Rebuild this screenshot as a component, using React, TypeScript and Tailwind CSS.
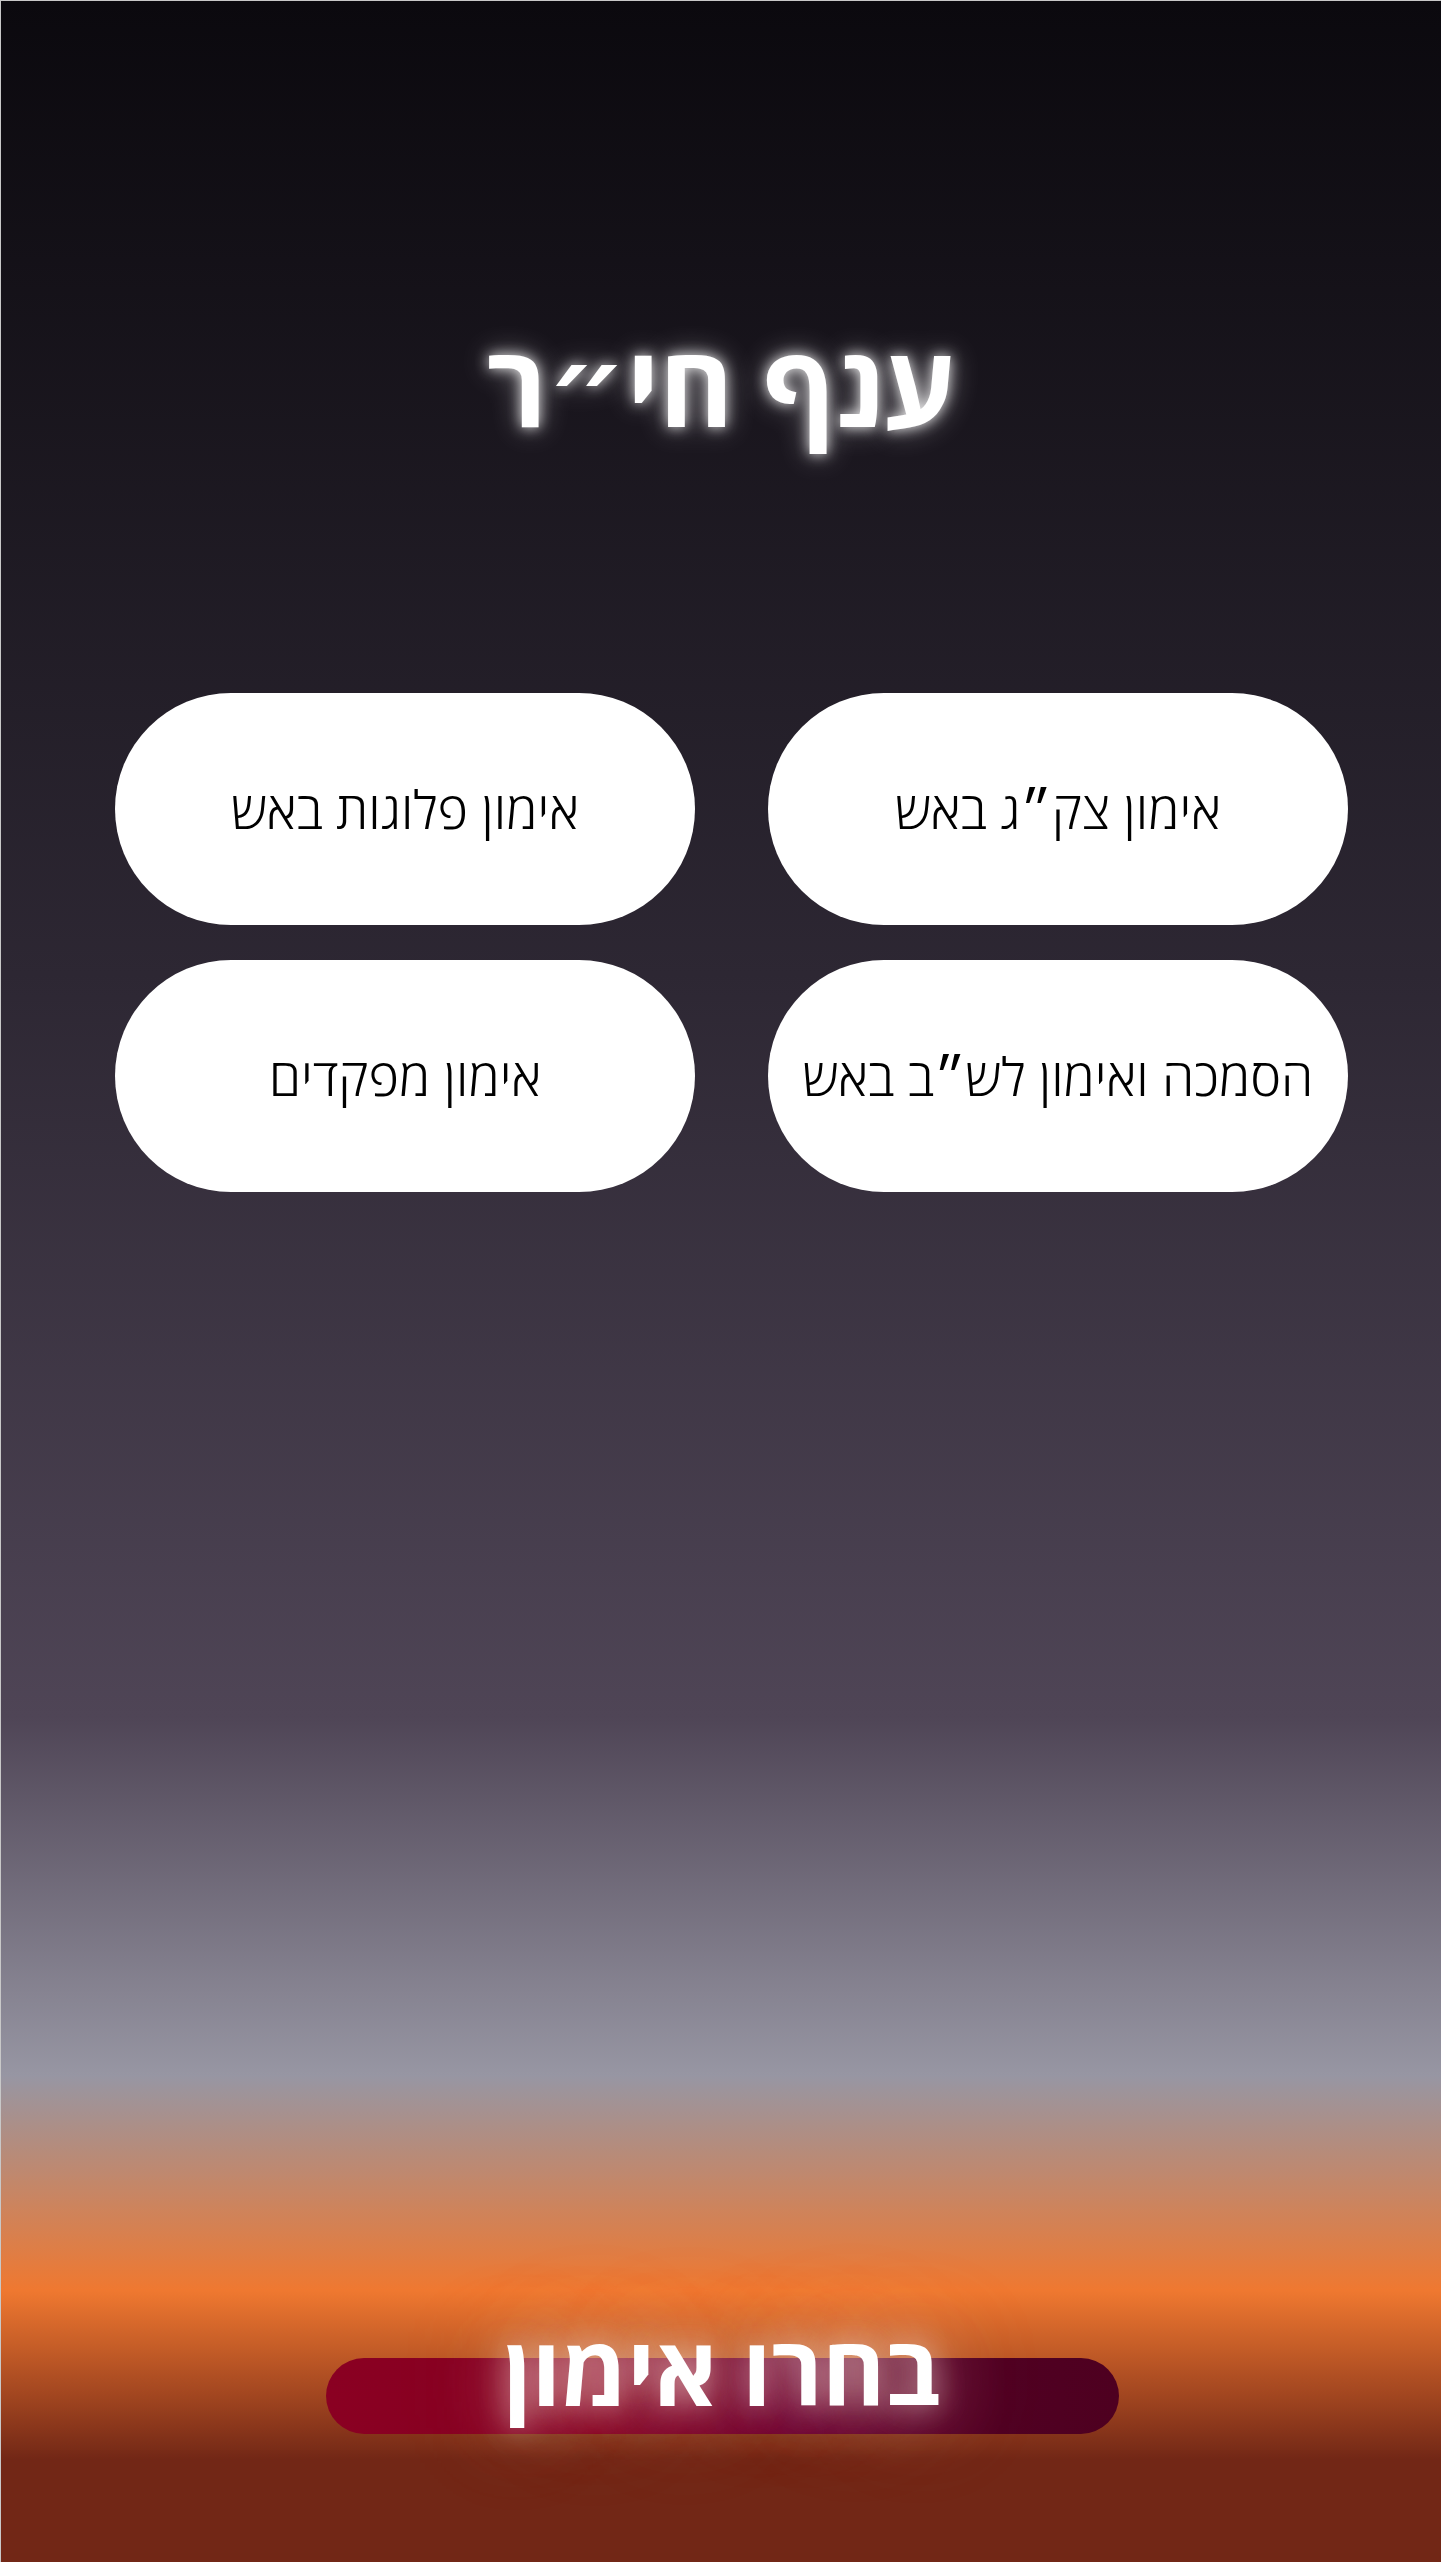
import React from "react";

const items = [
  "אימון צק״ג באש",
  "אימון פלוגות באש",
  "הסמכה ואימון לש״ב באש",
  "אימון מפקדים",
];

export default function App() {
  return (
    <div
      dir="rtl"
      className="relative flex h-[2562px] w-full flex-col items-center overflow-hidden border-l border-t border-[#c8c8c8] bg-[linear-gradient(to_bottom,#0b090e_0%,#2d2733_38%,#4f4556_67%,#9796a3_81%,#ef7830_89.4%,#722716_96%,#722716_100%)] font-['Open_Sans','DejaVu_Sans',sans-serif]"
    >
      <h1 className="mt-[312px] text-[113px] font-bold leading-[140px] text-white [text-shadow:0_0_14px_rgba(255,255,255,0.9),0_0_30px_rgba(255,255,255,0.45)]">
        ענף חי״ר
      </h1>

      <div className="mt-[240px] grid w-full grid-cols-2 gap-x-[73px] gap-y-[35px] pl-[114px] pr-[93px]">
        {items.map((t) => (
          <button
            key={t}
            className="flex h-[232px] items-center justify-center rounded-full bg-white text-[52px] font-light leading-none text-black"
          >
            {t}
          </button>
        ))}
      </div>

      <div className="flex-1" />

      <div className="mb-[128px] ml-[2px] flex h-[76px] w-[793px] items-center justify-center rounded-full bg-[linear-gradient(to_right,#8a0022_0%,#850022_35%,#6a0030_60%,#500022_85%,#4e0020_100%)]">
        <span className="-mt-[54px] text-[96px] font-bold leading-none text-white [text-shadow:0_0_30px_rgba(255,235,225,0.6),0_0_70px_rgba(255,225,205,0.55),0_0_110px_rgba(255,220,200,0.35)]">
          בחרו אימון
        </span>
      </div>
    </div>
  );
}
